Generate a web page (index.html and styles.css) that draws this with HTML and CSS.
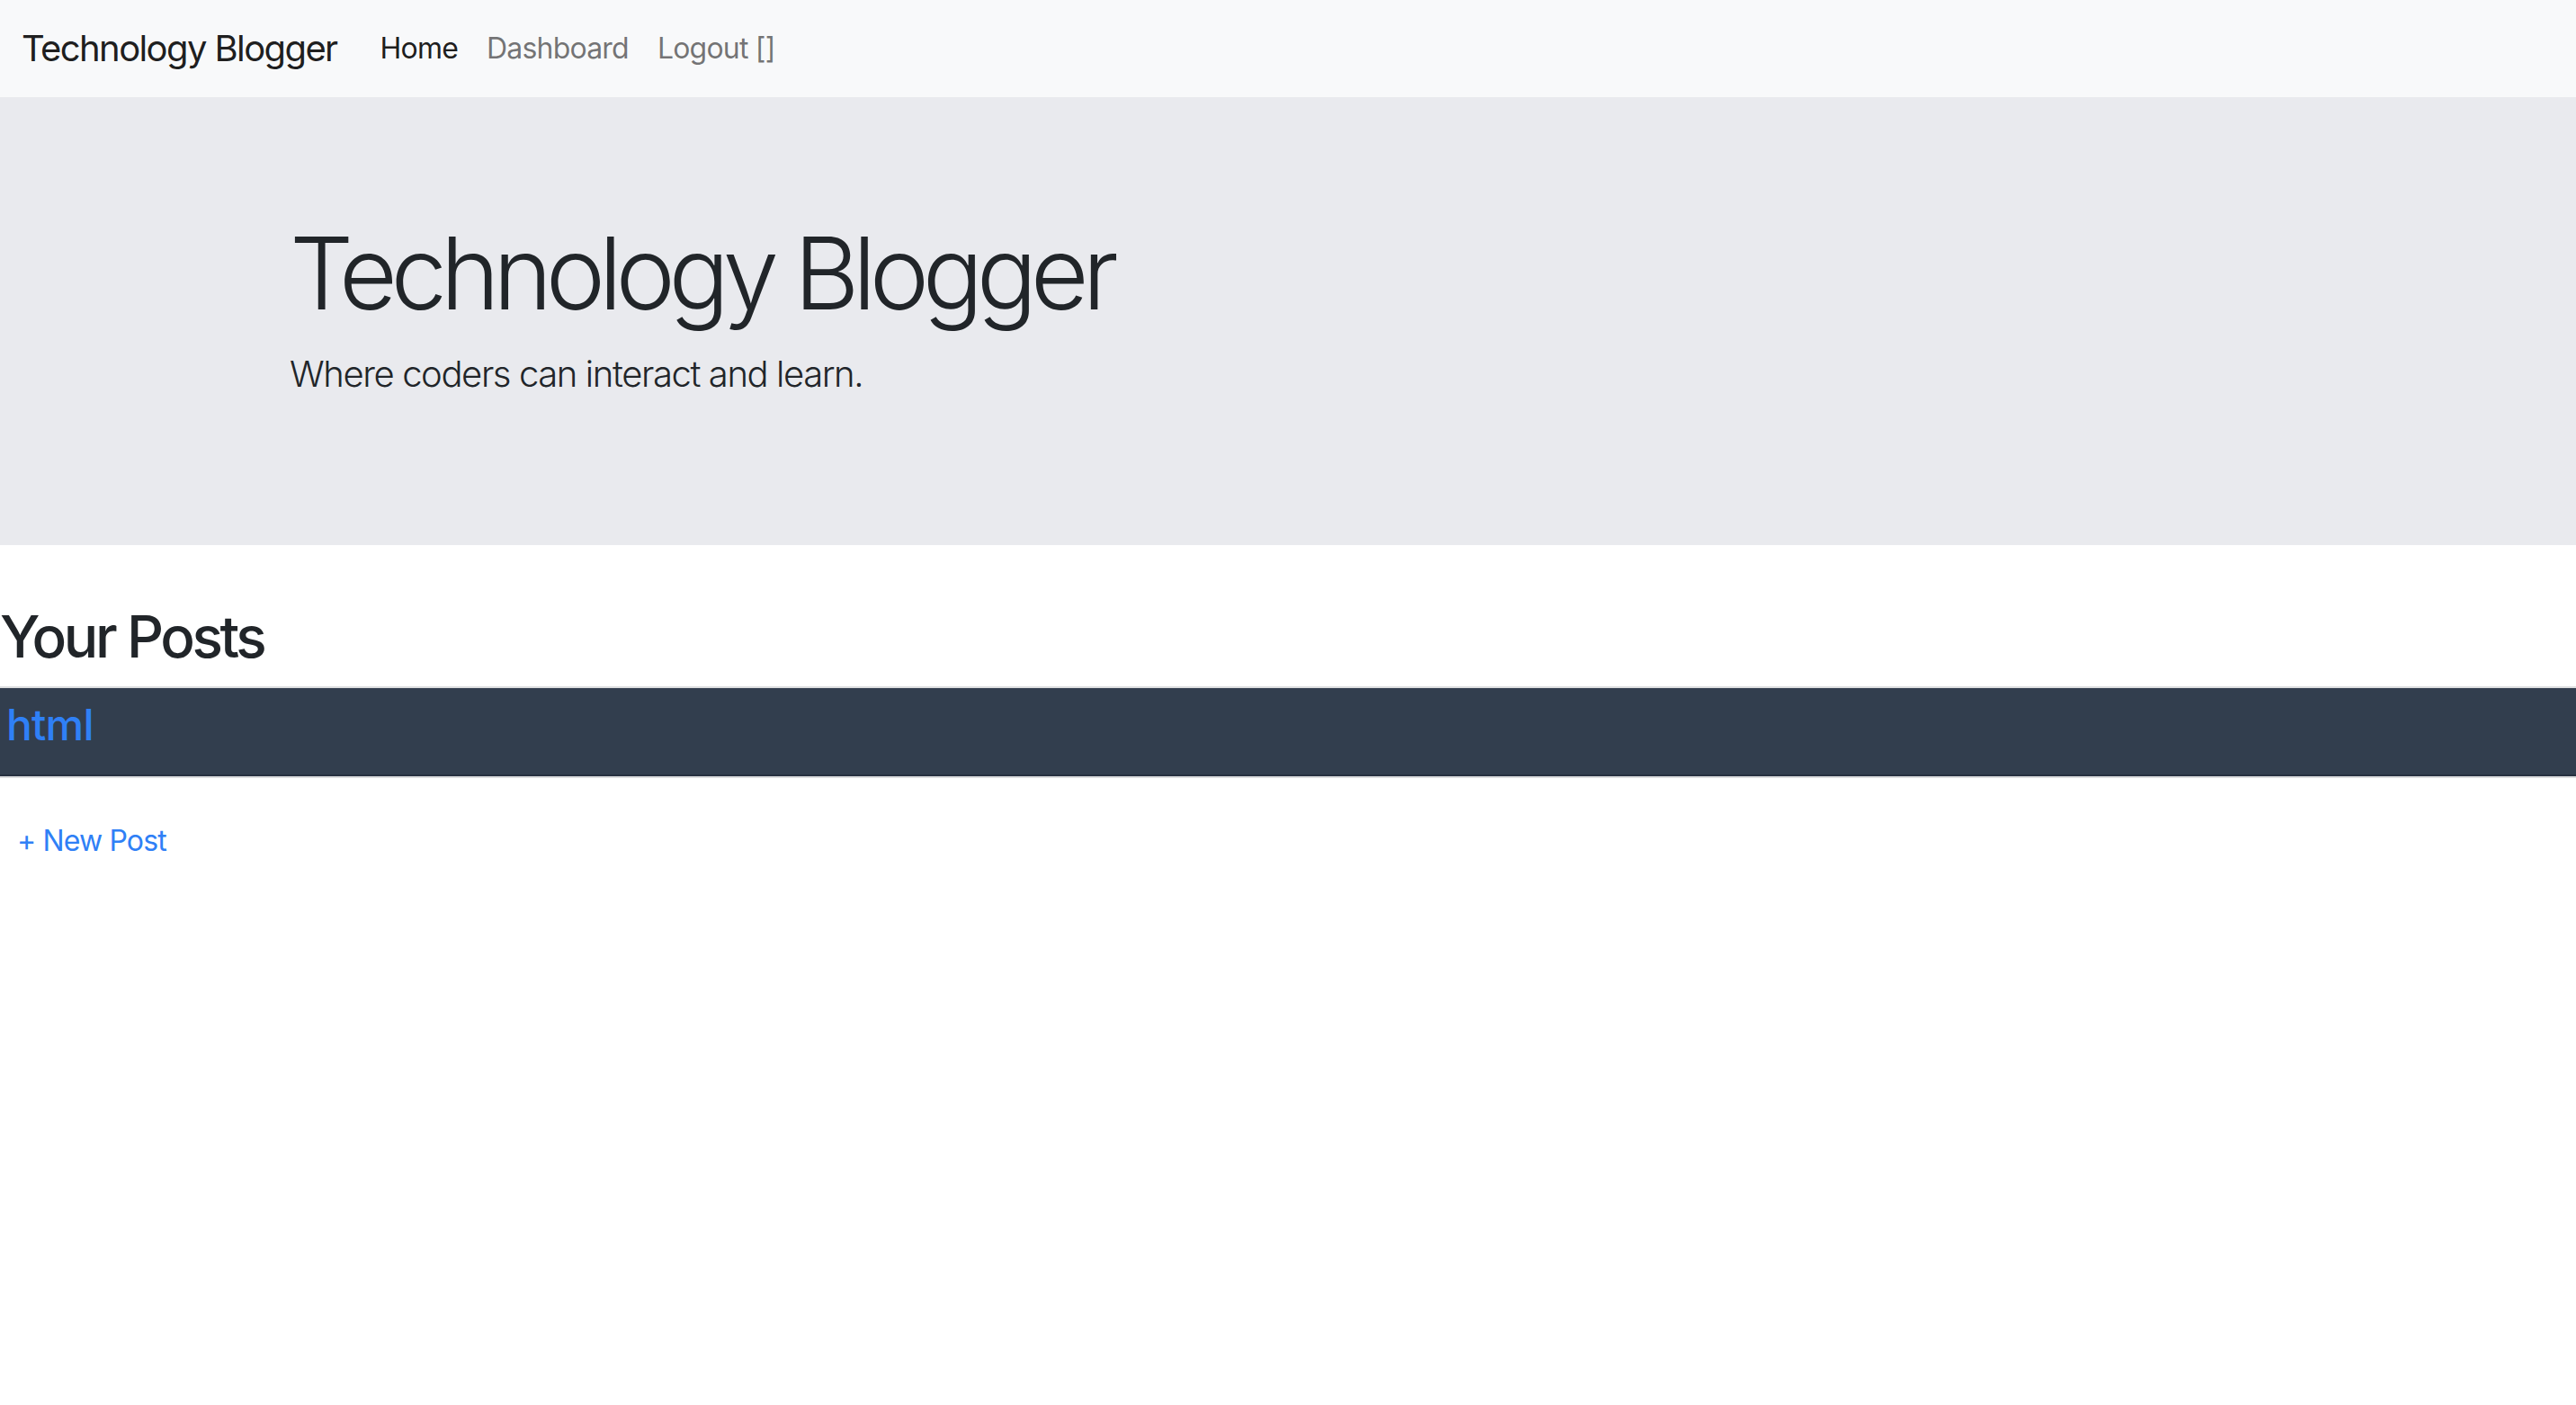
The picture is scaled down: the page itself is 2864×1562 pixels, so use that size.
FILE: index.html
```html
<!DOCTYPE html>
<html lang="en">
<head>
<meta charset="utf-8">
<title>Technology Blogger</title>
<link rel="stylesheet" href="styles.css">
</head>
<body>
<nav class="navbar">
  <a class="brand" href="#">Technology Blogger</a>
  <ul class="nav">
    <li><a class="nav-link active" href="#">Home</a></li>
    <li><a class="nav-link" href="#">Dashboard</a></li>
    <li><a class="nav-link" href="#">Logout []</a></li>
  </ul>
</nav>
<section class="jumbotron">
  <div class="container">
    <h1 class="display">Technology Blogger</h1>
    <p class="lead">Where coders can interact and learn.</p>
  </div>
</section>
<main class="posts">
  <h2 class="posts-title">Your Posts</h2>
  <div class="card">
    <div class="card-header">
      <h4 class="post-title"><a href="#">html</a></h4>
    </div>
  </div>
  <div class="actions">
    <a class="new-post" href="#">+ New Post</a>
  </div>
</main>
</body>
</html>
```
FILE: styles.css
```css
* { box-sizing: border-box; }
html, body {
  margin: 0;
  padding: 0;
  background: #ffffff;
  color: #212529;
  font-family: Inter, "Liberation Sans", sans-serif;
}
a { text-decoration: none; }

.navbar {
  height: 108px;
  background: #f8f9fa;
  display: flex;
  align-items: center;
  padding: 0 24px;
}
.brand {
  font-size: 40px;
  line-height: 60px;
  color: rgba(0, 0, 0, 0.9);
  margin-right: 32px;
  letter-spacing: -1.6px;
}
.nav {
  display: flex;
  list-style: none;
  margin: 0;
  padding: 0;
}
.nav-link {
  display: block;
  padding: 0 16px;
  font-size: 32px;
  line-height: 48px;
  color: rgba(0, 0, 0, 0.55);
  letter-spacing: -0.8px;
}
.nav-link.active { color: rgba(0, 0, 0, 0.9); }

.jumbotron {
  background: #e9eaee;
  padding: 128px 0;
  margin-bottom: 64px;
}
.container {
  width: 2280px;
  margin: 0 auto;
  padding: 0 30px;
}
.display {
  font-size: 112px;
  font-weight: 300;
  line-height: 1.2;
  margin: 0 0 16px;
  letter-spacing: -7.4px;
}
.lead {
  font-size: 40px;
  font-weight: 300;
  line-height: 1.5;
  margin: 0 0 32px;
  letter-spacing: -1.4px;
}

.posts-title {
  font-size: 64px;
  font-weight: 500;
  line-height: 1.2;
  margin: 0 0 16px;
  letter-spacing: -3.4px;
}
.card {
  border-top: 2px solid #dcdddf;
  border-bottom: 2px solid #dcdddf;
}
.card-header {
  background: #323e4e;
  padding: 12px 7px 10px;
  border-bottom: 2px solid #273140;
}
.post-title {
  font-size: 48px;
  font-weight: 500;
  line-height: 1.2;
  margin: 0 0 16px;
  letter-spacing: -0.8px;
}
.post-title a { color: #2f80f6; }

.actions {
  padding: 46px 19px;
}
.new-post {
  font-size: 32px;
  line-height: 48px;
  color: #2f80f6;
  letter-spacing: -0.85px;
}
```
